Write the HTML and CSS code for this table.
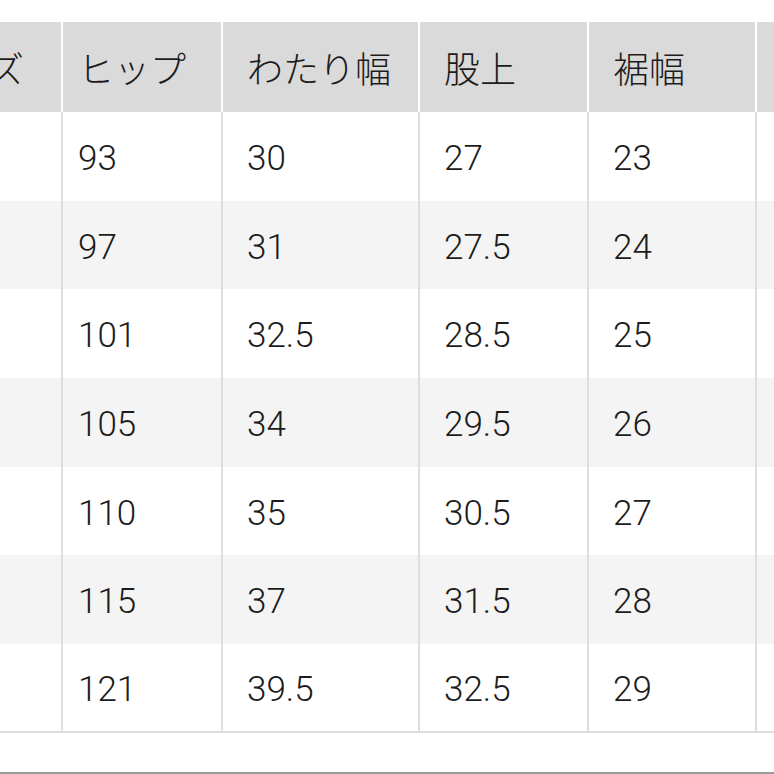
FILE: index.html
```
<!DOCTYPE html>
<html lang="ja">
<head>
<meta charset="utf-8">
<link rel="stylesheet" href="styles.css">
</head>
<body>
<div class="viewport">
  <table class="size-table">
    <thead>
      <tr>
        <th class="c1">サイズ</th>
        <th class="c2">ヒップ</th>
        <th class="c3">わたり幅</th>
        <th class="c4">股上</th>
        <th class="c5">裾幅</th>
        <th class="c6">股下</th>
      </tr>
    </thead>
    <tbody>
      <tr><td class="c1">XS</td><td class="c2">93</td><td class="c3">30</td><td class="c4">27</td><td class="c5">23</td><td class="c6">76</td></tr>
      <tr><td class="c1">S</td><td class="c2">97</td><td class="c3">31</td><td class="c4">27.5</td><td class="c5">24</td><td class="c6">76</td></tr>
      <tr><td class="c1">M</td><td class="c2">101</td><td class="c3">32.5</td><td class="c4">28.5</td><td class="c5">25</td><td class="c6">76</td></tr>
      <tr><td class="c1">L</td><td class="c2">105</td><td class="c3">34</td><td class="c4">29.5</td><td class="c5">26</td><td class="c6">76</td></tr>
      <tr><td class="c1">XL</td><td class="c2">110</td><td class="c3">35</td><td class="c4">30.5</td><td class="c5">27</td><td class="c6">76</td></tr>
      <tr><td class="c1">XXL</td><td class="c2">115</td><td class="c3">37</td><td class="c4">31.5</td><td class="c5">28</td><td class="c6">76</td></tr>
      <tr><td class="c1">3XL</td><td class="c2">121</td><td class="c3">39.5</td><td class="c4">32.5</td><td class="c5">29</td><td class="c6">76</td></tr>
    </tbody>
  </table>
  <div class="footer-rule"></div>
</div>
</body>
</html>
```

FILE: styles.css
```
html, body {
  margin: 0;
  padding: 0;
  background: #ffffff;
  overflow: hidden;
}

.viewport {
  width: 774px;
  height: 774px;
  overflow: hidden;
  display: flex;
  flex-direction: column;
  font-family: "Noto Sans CJK JP", "Noto Sans", sans-serif;
  color: #1c1c1c;
}

.size-table {
  margin-top: 22px;
  margin-left: -107px;
  border-collapse: separate;
  border-spacing: 0;
  table-layout: fixed;
  width: 1040px;
  flex: none;
}

.size-table th,
.size-table td {
  text-align: left;
  vertical-align: middle;
  padding: 0 0 0 24px;
  white-space: nowrap;
  box-sizing: border-box;
}

.size-table th {
  background: #dadada;
  border-right: 2px solid #ffffff;
  font-size: 36px;
  font-weight: 300;
  height: 90px;
}

.size-table td {
  border-right: 2px solid #dedede;
  font-family: Roboto, "Noto Sans CJK JP", sans-serif;
  font-size: 35px;
  font-weight: 300;
  height: 88.7px;
  padding-top: 4px;
}

.size-table tbody tr:nth-child(even) td {
  background: #f4f4f4;
}

.size-table tbody tr:last-child td {
  border-bottom: 2px solid #dedede;
}

.size-table .c1 { width: 170px; }
.size-table .c2 { width: 160px; padding-left: 15px; }
.size-table .c3 { width: 197px; }
.size-table .c4 { width: 169px; }
.size-table .c5 { width: 168px; }
.size-table .c6 { width: 176px; }

.footer-rule {
  margin-top: auto;
  height: 2px;
  background: #9a9a9a;
  flex: none;
}
```
